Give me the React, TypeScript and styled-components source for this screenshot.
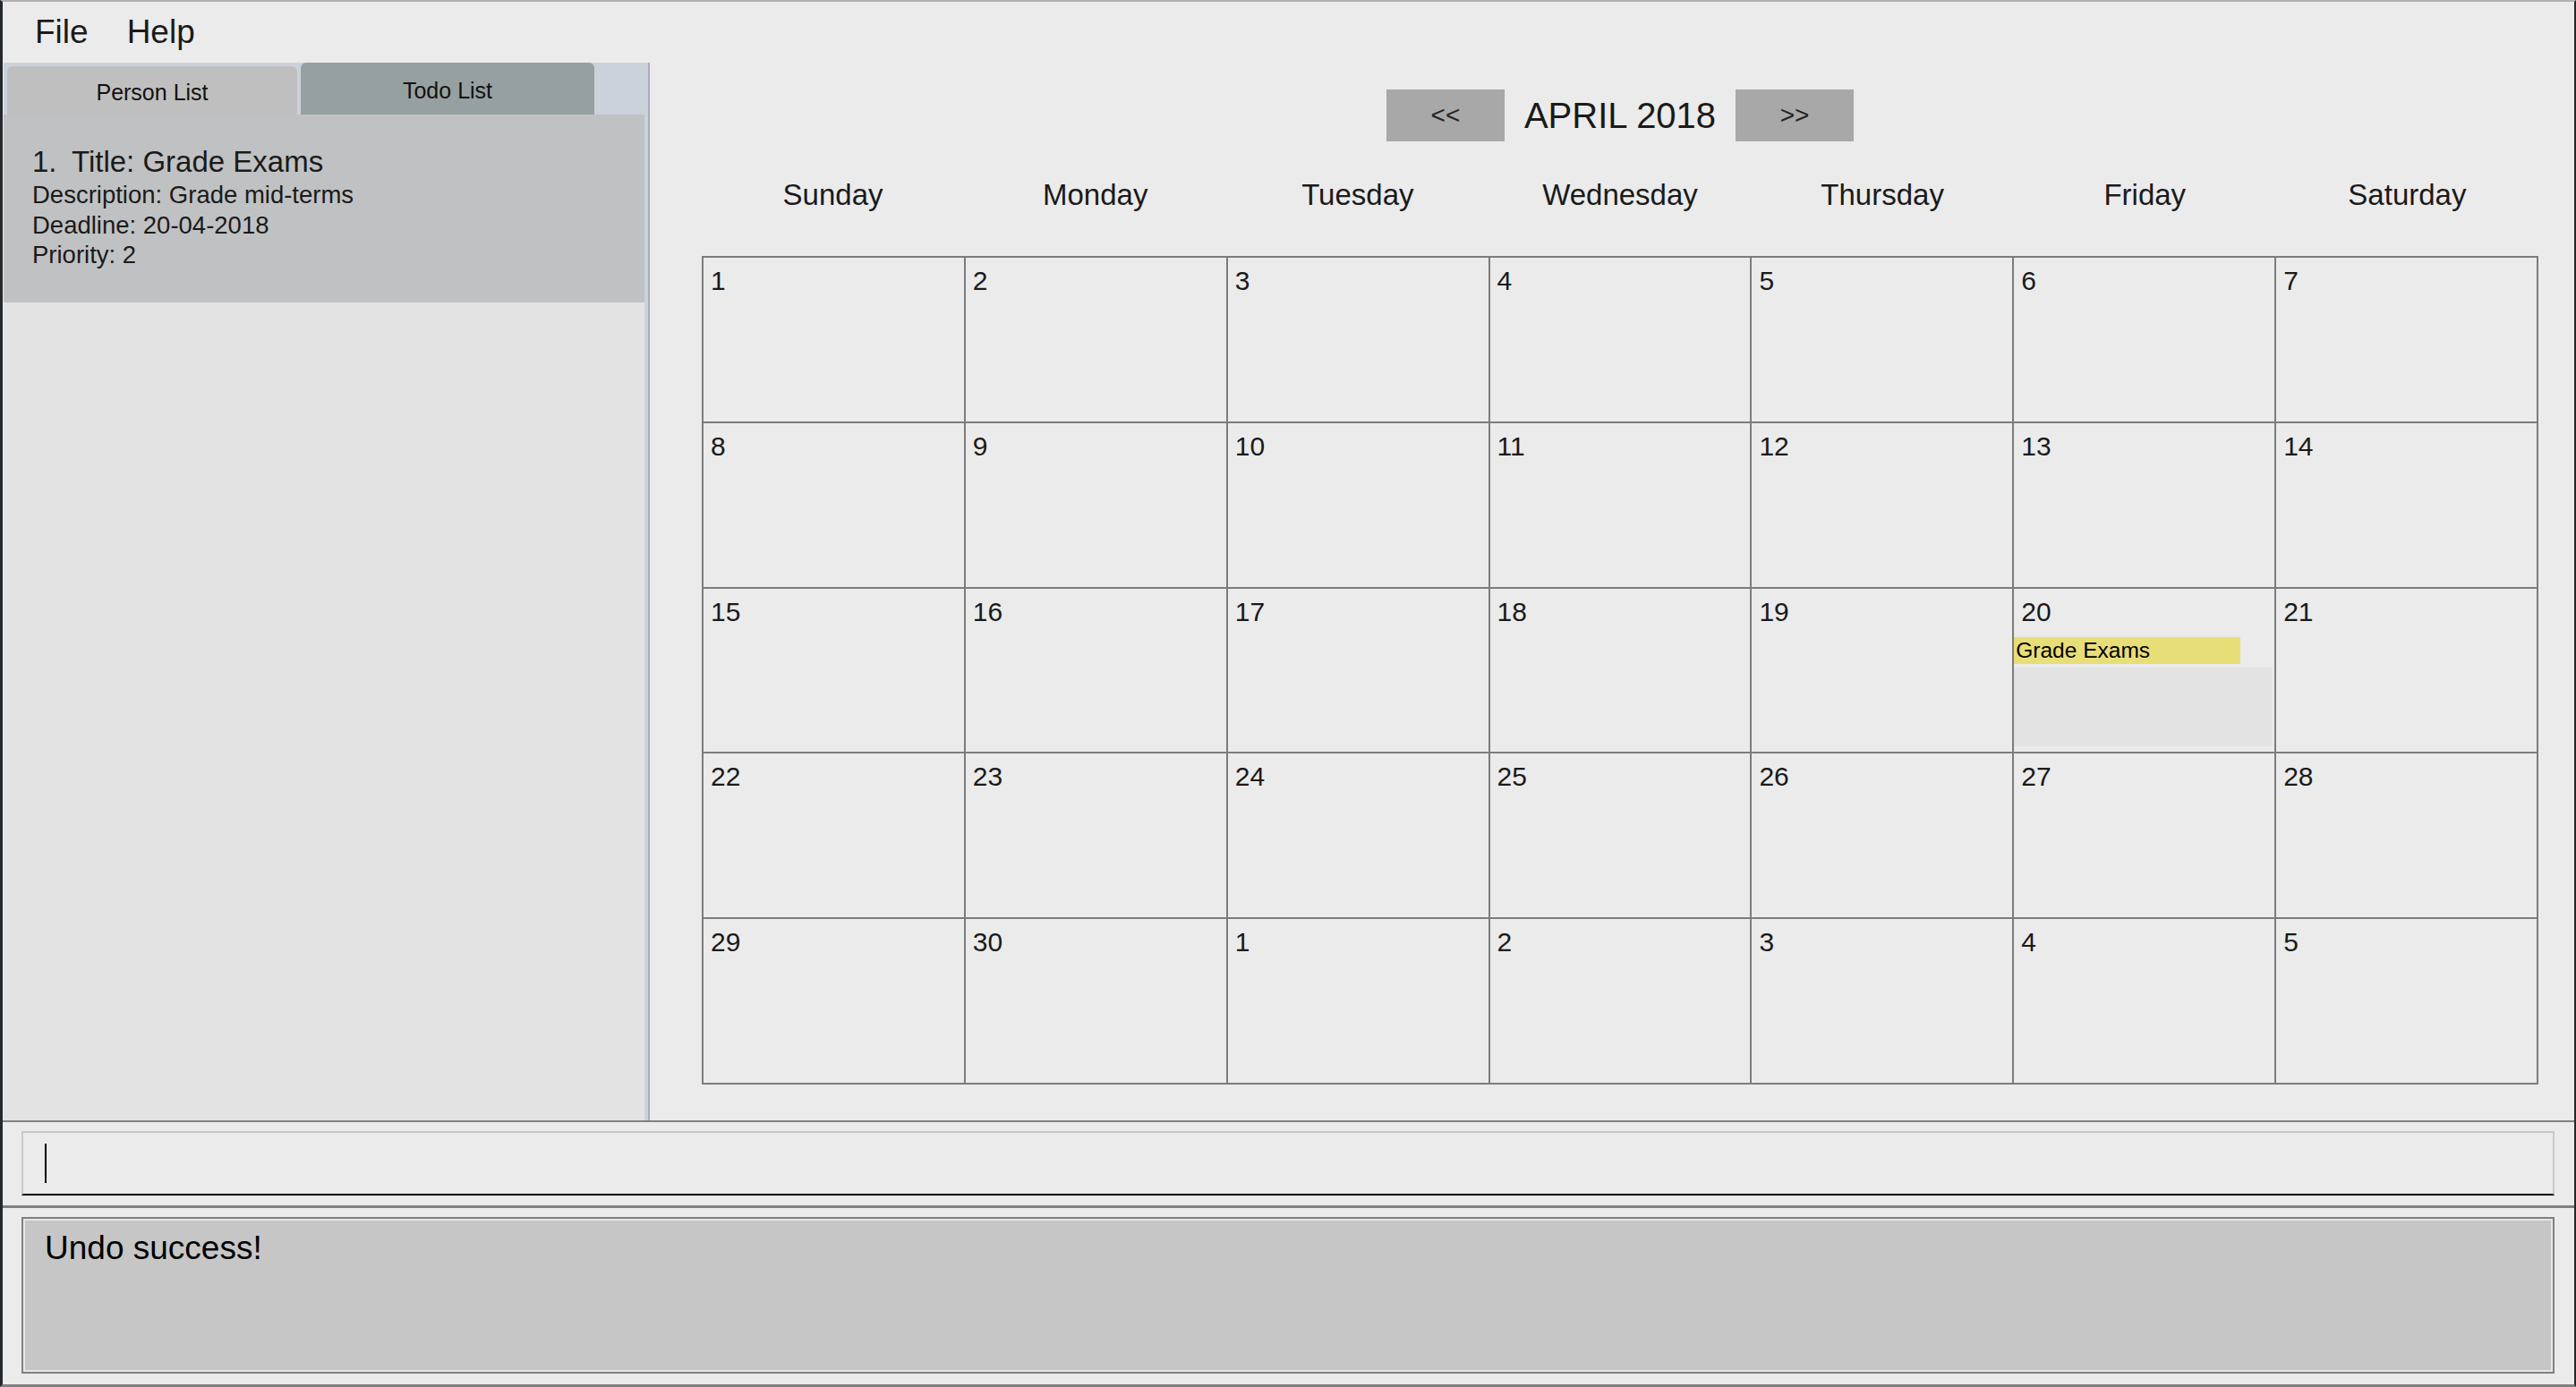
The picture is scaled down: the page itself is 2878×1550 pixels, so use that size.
import styled, { createGlobalStyle } from 'styled-components';

const GlobalStyle = createGlobalStyle`
  html, body {
    margin: 0;
    padding: 0;
    background: #ebebeb;
  }
  body {
    font-family: "Liberation Sans", Arial, sans-serif;
    color: #1a1a1a;
  }
  * {
    box-sizing: border-box;
  }
`;

const Window = styled.div`
  width: 2878px;
  height: 1550px;
  display: flex;
  flex-direction: column;
  background: #ebebeb;
  border-top: 2px solid #b0b0b0;
  border-left: 3px solid #24282c;
  border-right: 2px solid #24282c;
  border-bottom: 3px solid #808080;
  overflow: hidden;
`;

const MenuBar = styled.div`
  height: 68px;
  flex: none;
  display: flex;
  align-items: center;
  gap: 43px;
  padding-left: 36px;
`;

const MenuItem = styled.span`
  font-size: 37px;
  line-height: 68px;
`;

const Main = styled.div`
  height: 1182px;
  flex: none;
  display: flex;
`;

const LeftPanel = styled.div`
  width: 723px;
  flex: none;
  display: flex;
  flex-direction: column;
  padding-left: 1px;
  border-right: 2px solid #a9adb5;
`;

const TabStrip = styled.div`
  height: 58px;
  flex: none;
  display: flex;
  align-items: flex-end;
  gap: 4px;
  padding-left: 4px;
  background: #cbd2dc;
`;

interface ITab {
  selected?: boolean;
}

const Tab = styled.div<ITab>`
  width: ${(props) => (props.selected ? '328px' : '324px')};
  height: ${(props) => (props.selected ? '58px' : '54px')};
  border-radius: 6px 6px 0 0;
  background: ${(props) => (props.selected ? '#97a0a0' : '#bfbfbf')};
  display: flex;
  align-items: center;
  justify-content: center;
  padding-top: 4px;
  font-size: 25px;
  color: #111;
`;

const TabBody = styled.div`
  flex: 1;
  background: #e3e3e3;
  border-right: 4px solid #cbd2dc;
`;

const TodoCard = styled.div`
  height: 210px;
  background: #c0c1c2;
  padding: 33px 32px 0;
`;

const TodoTitle = styled.div`
  font-size: 33px;
  line-height: 40px;
`;

const TodoIndex = styled.span`
  display: inline-block;
  width: 44px;
`;

const TodoLine = styled.div`
  font-size: 27.5px;
  line-height: 33.5px;
`;

const Calendar = styled.div`
  flex: 1;
  display: flex;
  flex-direction: column;
  padding: 30px 40px 0 58px;
`;

const NavBar = styled.div`
  height: 58px;
  flex: none;
  display: flex;
  justify-content: center;
  align-items: center;
  gap: 22px;
`;

const NavButton = styled.div`
  width: 132px;
  height: 58px;
  background: #a8a8a8;
  display: flex;
  align-items: center;
  justify-content: center;
  font-size: 28px;
  color: #222;
`;

const MonthTitle = styled.div`
  font-size: 40px;
`;

const DayHeaderRow = styled.div`
  height: 120px;
  flex: none;
  display: grid;
  grid-template-columns: repeat(7, 1fr);
  align-items: center;
  text-align: center;
  font-size: 33px;
`;

const MonthGrid = styled.div`
  width: 2052px;
  height: 926px;
  margin-top: 8px;
  display: grid;
  grid-template-columns: repeat(7, 1fr);
  grid-template-rows: repeat(5, 1fr);
  border-top: 2px solid #7c7c7c;
  border-left: 2px solid #7c7c7c;
`;

const DayCell = styled.div`
  border-right: 2px solid #7c7c7c;
  border-bottom: 2px solid #7c7c7c;
  min-width: 0;
  min-height: 0;
`;

const DayNumber = styled.div`
  padding: 9px 8px 0;
  font-size: 30px;
  line-height: 33px;
`;

const EventTag = styled.div`
  margin-top: 12px;
  width: 253px;
  height: 30px;
  background: #e8de78;
  font-size: 24.5px;
  line-height: 30px;
  padding-left: 2px;
  color: #000;
`;

const EventFiller = styled.div`
  margin: 4px 2px 0 0;
  height: 88px;
  background: #e3e3e3;
`;

const Separator = styled.div<{ thick?: boolean }>`
  height: ${(props) => (props.thick ? '3px' : '2px')};
  flex: none;
  background: #808080;
`;

const CommandArea = styled.div`
  height: 93px;
  flex: none;
  padding: 10px 22px 11px 21px;
`;

const CommandBox = styled.div`
  height: 72px;
  border: 2px solid #c8c8c8;
  border-bottom-color: #000;
  padding: 12px 24px 0;
`;

const Caret = styled.div`
  width: 2px;
  height: 44px;
  background: #000;
`;

const ResultArea = styled.div`
  flex: 1;
  padding: 10px 22px 12px 21px;
`;

const ResultBox = styled.div`
  height: 100%;
  border: 2px solid #808080;
  box-shadow: inset 0 0 0 2px #e6e6e6;
  background: #c6c6c6;
  padding: 13px 24px;
  font-size: 37px;
  line-height: 40px;
  color: #000;
`;

const DAYS = ['Sunday', 'Monday', 'Tuesday', 'Wednesday', 'Thursday', 'Friday', 'Saturday'];

const CELLS = [
  ...Array.from({ length: 30 }, (_, i) => i + 1),
  1, 2, 3, 4, 5,
];

function App() {
  return (
    <>
      <GlobalStyle />
      <Window>
        <MenuBar>
          <MenuItem>File</MenuItem>
          <MenuItem>Help</MenuItem>
        </MenuBar>
        <Main>
          <LeftPanel>
            <TabStrip>
              <Tab>Person List</Tab>
              <Tab selected>Todo List</Tab>
            </TabStrip>
            <TabBody>
              <TodoCard>
                <TodoTitle>
                  <TodoIndex>1.</TodoIndex>Title: Grade Exams
                </TodoTitle>
                <TodoLine>Description: Grade mid-terms</TodoLine>
                <TodoLine>Deadline: 20-04-2018</TodoLine>
                <TodoLine>Priority: 2</TodoLine>
              </TodoCard>
            </TabBody>
          </LeftPanel>
          <Calendar>
            <NavBar>
              <NavButton>&lt;&lt;</NavButton>
              <MonthTitle>APRIL 2018</MonthTitle>
              <NavButton>&gt;&gt;</NavButton>
            </NavBar>
            <DayHeaderRow>
              {DAYS.map((d) => (
                <div key={d}>{d}</div>
              ))}
            </DayHeaderRow>
            <MonthGrid>
              {CELLS.map((n, i) => (
                <DayCell key={i}>
                  <DayNumber>{n}</DayNumber>
                  {i === 19 && (
                    <>
                      <EventTag>Grade Exams</EventTag>
                      <EventFiller />
                    </>
                  )}
                </DayCell>
              ))}
            </MonthGrid>
          </Calendar>
        </Main>
        <Separator />
        <CommandArea>
          <CommandBox>
            <Caret />
          </CommandBox>
        </CommandArea>
        <Separator thick />
        <ResultArea>
          <ResultBox>Undo success!</ResultBox>
        </ResultArea>
      </Window>
    </>
  );
}

export default App;
